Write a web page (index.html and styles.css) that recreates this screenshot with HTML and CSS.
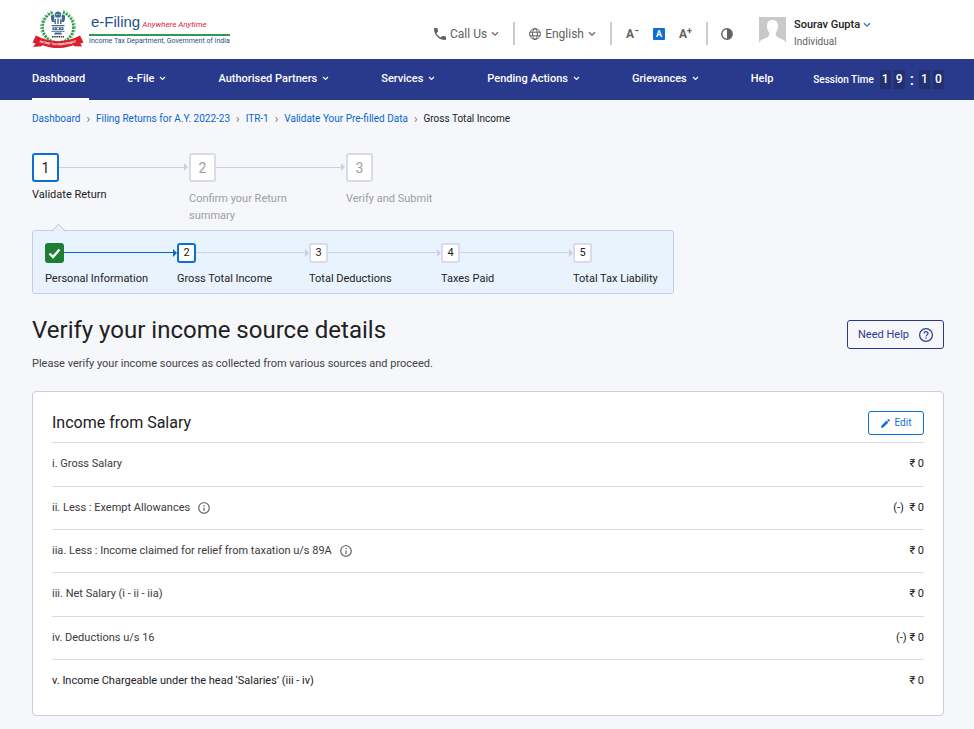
FILE: index.html
```
<!DOCTYPE html>
<html lang="en">
<head>
    <meta charset="UTF-8">
    <meta name="viewport" content="width=device-width, initial-scale=1.0">
    <title>Gross Total Income</title>
    <link rel="stylesheet" href="styles.css">
</head>
<body>

    <!-- Shared icons -->
    <svg class="icon-defs" width="0" height="0" aria-hidden="true">
        <symbol id="chevron" viewBox="0 0 8 6">
            <path d="M1 1.2 4 4.2 7 1.2" fill="none" stroke="currentColor" stroke-width="1.3"/>
        </symbol>
        <symbol id="info" viewBox="0 0 24 24">
            <path fill="currentColor" d="M11 7h2v2h-2zm0 4h2v6h-2zm1-9C6.48 2 2 6.48 2 12s4.48 10 10 10 10-4.480 10-10S17.520 2 12 2zm0 18c-4.410 0-8-3.590-8-8s3.590-8 8-8 8 3.590 8 8-3.590 8-8 8z"/>
        </symbol>
    </svg>

    <header class="header">
        <a class="logo" href="#">
            <svg class="emblem" viewBox="0 0 52 40" aria-hidden="true">
                <circle cx="26" cy="19" r="15.500" fill="none" stroke="#2e9b4f" stroke-width="2.600" stroke-dasharray="2.200 0.9"/>
                <circle cx="26" cy="19" r="17.500" fill="none" stroke="#57b06d" stroke-width="1" stroke-dasharray="1.500 2"/>
                <rect x="21" y="0" width="10" height="5" fill="#fff"/>
                <g fill="#41698f">
                    <path d="M23.500 4.500c1.500-1.500 3.500-1.500 5 0l.8 2.500-1 2.500h-4.600l-1-2.500z"/>
                    <path d="M19 7.500l2.500-1.200 1 2-.5 3.700.8 2h-2.800l-1-3z"/>
                    <path d="M33 7.500l-2.500-1.200-1 2 .5 3.700-.8 2h2.800l1-3z"/>
                    <path d="M22.500 11h1.400v5h-1.400zM25.300 10.500h1.400v5.500h-1.400zM28.100 11h1.400v5h-1.400z"/>
                    <path d="M19.500 17h13v1.200h-13zM20.500 19.200h11v2.800h-11zM19.500 22.800h13v1h-13zM23 24.500h6l1.200 2h-8.400z"/>
                </g>
                <g fill="#fff">
                    <circle cx="24.800" cy="6.600" r=".6"/>
                    <circle cx="27.200" cy="6.600" r=".6"/>
                    <circle cx="26" cy="20.600" r="1.100"/>
                    <circle cx="22.500" cy="20.600" r=".6"/>
                    <circle cx="29.500" cy="20.600" r=".6"/>
                </g>
                <path d="M20 28.800h12" fill="none" stroke="#333" stroke-width="1.500" stroke-dasharray="1.500 .7"/>
                <path fill="#d91f2d" d="M4 27.500C18 35 34 35 48 27.500L51.500 34.500 48.500 35.500 50 38.500 42.500 38.300 41.500 37.300C31 41 21 41 10.500 37.300L9.500 38.300 1 39 3.500 35.500.5 34.500z"/>
                <path id="ribbon-line" fill="none" d="M3 32.500C18 38.800 34 38.800 49 32.500"/>
                <text class="ribbon-text"><textPath href="#ribbon-line" startOffset="50%" text-anchor="middle">INCOME TAX DEPARTMENT</textPath></text>
            </svg>
            <span class="logo-text">
                <span class="logo-title">e-Filing <em>Anywhere Anytime</em></span>
                <span class="logo-sub">Income Tax Department, Government of India</span>
            </span>
        </a>

        <div class="tools">
            <button type="button" class="tool call">
                <svg width="12" height="12" viewBox="3 3 18 18" aria-hidden="true"><path fill="currentColor" d="M6.620 10.790c1.440 2.830 3.760 5.140 6.590 6.590l2.200-2.200c.27-.27.67-.36 1.020-.24 1.120.37 2.330.57 3.570.57.55 0 1 .45 1 1V20c0 .55-.45 1-1 1-9.390 0-17-7.610-17-17 0-.55.45-1 1-1h3.500c.55 0 1 .45 1 1 0 1.250.2 2.450.57 3.570.11.35.03.74-.25 1.020l-2.200 2.200z"/></svg>
                Call Us
                <svg class="caret brown" aria-hidden="true"><use href="#chevron"/></svg>
            </button>
            <button type="button" class="tool lang">
                <svg width="12" height="12" viewBox="0 0 12 12" fill="none" stroke="currentColor" stroke-width="1" aria-hidden="true"><circle cx="6" cy="6" r="5.400"/><ellipse cx="6" cy="6" rx="2.400" ry="5.400"/><path d="M.9 4.200h10.200M.9 7.800h10.200"/></svg>
                English
                <svg class="caret brown" aria-hidden="true"><use href="#chevron"/></svg>
            </button>
            <div class="tool sizes">
                <button type="button" class="size" aria-label="Decrease text size">A<sup>−</sup></button>
                <button type="button" class="size active" aria-label="Normal text size">A</button>
                <button type="button" class="size" aria-label="Increase text size">A<sup>+</sup></button>
            </div>
            <button type="button" class="tool contrast" aria-label="Contrast">
                <svg width="12" height="12" viewBox="0 0 12 12" aria-hidden="true"><circle cx="6" cy="6" r="5.200" fill="#fff" stroke="currentColor" stroke-width="1.400"/><path d="M6 1a5 5 0 0 1 0 10z" fill="currentColor"/></svg>
            </button>
            <button type="button" class="user">
                <svg class="avatar" viewBox="0 0 27 27" aria-hidden="true"><rect width="27" height="27" fill="#c9c9c9"/><path fill="#fff" d="M13.500 3c3.500 0 5.500 2.300 5.500 6 0 2.600-.8 5-2.300 6.600 0 2.600.3 4 2.300 4.900 3 1.300 7 2 8 5.500v1H0v-1c1-3.500 5-4.200 8-5.500 2-.9 2.300-2.300 2.300-4.900C8.800 14 8 11.600 8 9c0-3.700 2-6 5.500-6z"/></svg>
                <span class="user-text">
                    <span class="user-name">Sourav Gupta <svg class="caret" aria-hidden="true"><use href="#chevron"/></svg></span>
                    <span class="user-role">Individual</span>
                </span>
            </button>
        </div>
    </header>

    <nav class="nav">
        <a class="nav-item current" href="#">Dashboard</a>
        <button type="button" class="nav-item">e-File <svg class="caret" aria-hidden="true"><use href="#chevron"/></svg></button>
        <button type="button" class="nav-item">Authorised Partners <svg class="caret" aria-hidden="true"><use href="#chevron"/></svg></button>
        <button type="button" class="nav-item">Services <svg class="caret" aria-hidden="true"><use href="#chevron"/></svg></button>
        <button type="button" class="nav-item">Pending Actions <svg class="caret" aria-hidden="true"><use href="#chevron"/></svg></button>
        <button type="button" class="nav-item">Grievances <svg class="caret" aria-hidden="true"><use href="#chevron"/></svg></button>
        <a class="nav-item help" href="#">Help</a>
        <div class="session">
            <span class="session-label">Session Time</span>
            <span class="digit">1</span>
            <span class="digit">9</span>
            <span class="colon">:</span>
            <span class="digit">1</span>
            <span class="digit">0</span>
        </div>
    </nav>

    <main class="content">
        <ol class="breadcrumb">
            <li><a href="#">Dashboard</a></li>
            <li><a href="#">Filing Returns for A.Y. 2022-23</a></li>
            <li><a href="#">ITR-1</a></li>
            <li><a href="#">Validate Your Pre-filled Data</a></li>
            <li>Gross Total Income</li>
        </ol>

        <!-- Main steps -->
        <ol class="steps">
            <li class="step active"><span class="step-no">1</span><span class="step-label">Validate Return</span></li>
            <li class="step"><span class="step-no">2</span><span class="step-label">Confirm your Return summary</span></li>
            <li class="step"><span class="step-no">3</span><span class="step-label">Verify and Submit</span></li>
        </ol>

        <!-- Sub steps of the current step -->
        <ol class="steps substeps">
            <li class="step done">
                <span class="step-no"><svg width="13" height="11" viewBox="0 0 13 11" aria-hidden="true"><path d="M1.500 5.500 5 9 11.500 1.500" fill="none" stroke="#fff" stroke-width="2.400"/></svg></span>
                <span class="step-label">Personal Information</span>
            </li>
            <li class="step active"><span class="step-no">2</span><span class="step-label">Gross Total Income</span></li>
            <li class="step"><span class="step-no">3</span><span class="step-label">Total Deductions</span></li>
            <li class="step"><span class="step-no">4</span><span class="step-label">Taxes Paid</span></li>
            <li class="step"><span class="step-no">5</span><span class="step-label">Total Tax Liability</span></li>
        </ol>

        <div class="title-row">
            <div>
                <h1>Verify your income source details</h1>
                <p class="intro">Please verify your income sources as collected from various sources and proceed.</p>
            </div>
            <button type="button" class="help-btn">
                Need Help
                <svg width="14" height="14" viewBox="0 0 14 14" fill="none" stroke="currentColor" aria-hidden="true"><circle cx="7" cy="7" r="6.400" stroke-width="1.200"/><path d="M5.100 5.600c0-2.600 3.900-2.500 3.900-.2 0 1.400-1.900 1.500-1.900 3M7.100 9.500v1.300" stroke-width="1.200"/></svg>
            </button>
        </div>

        <section class="card">
            <div class="card-head">
                <h2>Income from Salary</h2>
                <button type="button" class="edit-btn">
                    <svg width="9" height="9" viewBox="0 0 9 9" aria-hidden="true"><path fill="currentColor" d="M0 9l.4-2.200L5.600 1.600l1.800 1.800L2.200 8.600zM6.200 1l.8-.8c.2-.2.5-.2.7 0L8.800 1.300c.2.2.2.5 0 .7L8 2.800z"/></svg>
                    Edit
                </button>
            </div>
            <table class="income">
                <tr>
                    <th scope="row">i. Gross Salary</th>
                    <td>₹ 0</td>
                </tr>
                <tr>
                    <th scope="row">ii. Less : Exempt Allowances <svg class="info" aria-hidden="true"><use href="#info"/></svg></th>
                    <td>(-)&nbsp; ₹ 0</td>
                </tr>
                <tr>
                    <th scope="row">iia. Less : Income claimed for relief from taxation u/s 89A <svg class="info" aria-hidden="true"><use href="#info"/></svg></th>
                    <td>₹ 0</td>
                </tr>
                <tr class="net">
                    <th scope="row">iii. Net Salary (i - ii - iia)</th>
                    <td>₹ 0</td>
                </tr>
                <tr>
                    <th scope="row">iv. Deductions u/s 16</th>
                    <td>(-) ₹ 0</td>
                </tr>
                <tr class="total">
                    <th scope="row">v. Income Chargeable under the head ‘Salaries’ (iii - iv)</th>
                    <td>₹ 0</td>
                </tr>
            </table>
        </section>
    </main>

</body>
</html>
```

FILE: styles.css
```
* {
    box-sizing: border-box;
}
body {
    margin: 0;
    background-color: #f5f7fb;
    color: #212121;
    font-family: Roboto, "Liberation Sans", sans-serif;
    font-size: 11px;
    line-height: 16px;
}
button {
    padding: 0;
    border: none;
    background: none;
    color: inherit;
    font: inherit;
    cursor: pointer;
}
a {
    color: #0b66c9;
    text-decoration: none;
}
ol {
    margin: 0;
    padding: 0;
    list-style: none;
}
.icon-defs {
    display: block;
}
.caret {
    width: 8px;
    height: 6px;
    flex: none;
}
.brown {
    color: #7a6558;
}

/* Header */
.header {
    display: flex;
    justify-content: space-between;
    height: 59px;
    padding: 0 30px 0 32px;
    background-color: #fff;
}
.logo {
    display: flex;
    align-items: flex-start;
    gap: 5px;
    padding-top: 8px;
    color: #1d4f85;
}
.emblem {
    width: 52px;
    height: 40px;
}
.ribbon-text {
    font-size: 3px;
    font-weight: bold;
    fill: #fff;
}
.logo-text {
    display: flex;
    flex-direction: column;
    padding-top: 5px;
    white-space: nowrap;
}
.logo-title {
    padding-left: 2px;
    border-bottom: 2px solid #2e9b4f;
    font-family: "Liberation Sans", Arial, sans-serif;
    font-size: 15px;
    line-height: 18px;
}
.logo-title em {
    margin-left: -2px;
    color: #e0203a;
    font-family: Roboto, sans-serif;
    font-size: 8px;
}
.logo-sub {
    font-size: 7px;
    line-height: 10px;
}
.tools {
    display: flex;
    align-items: flex-start;
    padding-top: 17px;
    color: #616161;
}
.tool {
    display: flex;
    align-items: center;
    gap: 4px;
    height: 23px;
    margin-top: 5px;
    padding: 0 14px;
    border-right: 2px solid #ccc;
    font-size: 12px;
}
.sizes {
    gap: 14px;
}
.size {
    font-size: 12px;
    font-weight: 700;
}
.size sup {
    font-size: 9px;
    line-height: 1px;
    vertical-align: 4px;
}
.active.size {
    width: 12px;
    height: 12px;
    border-radius: 1px;
    background-color: #0b6fd6;
    color: #fff;
    font-size: 9px;
    line-height: 12px;
}
.contrast {
    padding-right: 26px;
    padding-left: 13px;
    border-right: none;
}
.user {
    display: flex;
    gap: 8px;
    width: 185px;
    text-align: left;
}
.avatar {
    width: 27px;
    height: 27px;
}
.user-text {
    display: flex;
    flex-direction: column;
}
.user-name {
    color: #212121;
    font-size: 11px;
    font-weight: 500;
}
.user-name .caret {
    color: #4a7291;
}
.user-role {
    font-size: 10px;
    line-height: 18px;
}

/* Navigation */
.nav {
    display: flex;
    gap: 38px;
    height: 41px;
    padding: 0 30px 0 32px;
    background-color: #293a8c;
    color: #fff;
}
.nav-item {
    display: flex;
    align-items: center;
    gap: 5px;
    padding-right: 14px;
    border-bottom: 2px solid transparent;
    color: #fff;
    font-size: 11px;
    font-weight: 500;
    white-space: nowrap;
}
.nav-item .caret {
    width: 7px;
    height: 5px;
}
.current {
    padding-right: 4px;
    border-color: #fff;
}
.help {
    padding-right: 0;
}
.session {
    display: flex;
    align-items: center;
    gap: 3px;
    margin-left: auto;
    font-weight: 500;
    white-space: nowrap;
}
.session-label {
    margin-right: 3px;
    font-size: 10px;
}
.digit {
    width: 11px;
    background-color: #23306f;
    font-size: 12px;
    line-height: 19px;
    text-align: center;
}
.colon {
    padding: 0 2px;
    font-size: 16px;
}

/* Page */
.content {
    padding: 10px 30px 13px 32px;
}
.breadcrumb {
    display: flex;
    font-size: 10px;
    line-height: 18px;
}
.breadcrumb li {
    display: flex;
}
.breadcrumb li + li::before {
    content: "›";
    margin: 0 6px;
    color: #757575;
    font-size: 12px;
}

/* Steps */
.steps {
    display: grid;
    grid-template-columns: repeat(3, 157px);
    margin-top: 25px;
}
.step {
    color: #9e9e9e;
}
.step-no {
    position: relative;
    display: flex;
    align-items: center;
    justify-content: center;
    width: 27px;
    height: 29px;
    border: 2px solid #dadaeb;
    border-radius: 3px;
    background-color: #fff;
    font-size: 14px;
}
.step-label {
    display: block;
    width: 120px;
    margin-top: 8px;
    line-height: 17px;
}
.active .step-no {
    border-color: #0b6fd6;
}
.active .step-label {
    margin-top: 4px;
}
.active {
    color: #212121;
}

/* connector line and arrow head between two boxes */
.step:not(:last-child) .step-no::before {
    content: "";
    position: absolute;
    top: 12px;
    left: 25px;
    width: 126px;
    height: 1px;
    background-color: #ccd0e6;
}
.step:not(:last-child) .step-no::after {
    content: "";
    position: absolute;
    top: 8px;
    left: 150px;
    border: 4px solid transparent;
    border-right: none;
    border-left-color: #ccd0e6;
}
.substeps {
    position: relative;
    grid-template-columns: repeat(5, 132px);
    width: 642px;
    max-width: 100%;
    margin-top: 6px;
    padding: 12px 0 6px 12px;
    border: 1px solid #c5cee8;
    border-radius: 3px;
    background-color: #e9f3fd;
}
.substeps::before {
    content: "";
    position: absolute;
    top: -5px;
    left: 20px;
    width: 9px;
    height: 9px;
    border: 1px solid #c5cee8;
    border-right-color: transparent;
    border-bottom-color: transparent;
    background: linear-gradient(135deg, #e9f3fd 50%, transparent 50%);
    transform: rotate(45deg);
}
.substeps .step {
    color: #212121;
}
.substeps .step-no {
    width: 19px;
    height: 20px;
    font-size: 11px;
}
.substeps .step-label {
    margin-top: 7px;
}
.substeps .step:not(:last-child) .step-no::before {
    top: 7px;
    left: 17px;
    width: 110px;
}
.substeps .step:not(:last-child) .step-no::after {
    top: 4px;
    left: 126px;
}
.substeps .done .step-no {
    border-color: #1e7e34;
    background-color: #1e7e34;
}
.substeps .done:not(:last-child) .step-no::before {
    background-color: #0b66c9;
}
.substeps .done:not(:last-child) .step-no::after {
    border-left-color: #0b66c9;
}

/* Title */
.title-row {
    display: flex;
    align-items: flex-start;
    justify-content: space-between;
    margin-top: 20px;
}
h1 {
    margin: 0;
    font-size: 24px;
    font-weight: 400;
    line-height: 32px;
}
.intro {
    margin: 10px 0 19px;
    color: #424242;
}
.help-btn {
    display: flex;
    align-items: center;
    gap: 10px;
    height: 29px;
    margin-top: 6px;
    padding: 0 10px;
    border: 1px solid #293a8c;
    border-radius: 3px;
    color: #293a8c;
}

/* Card */
.card {
    padding: 19px 19px 13px;
    border: 1px solid #c9cce3;
    border-radius: 4px;
    background-color: #fff;
}
.card-head {
    display: flex;
    align-items: flex-start;
    justify-content: space-between;
    padding-bottom: 7px;
    border-bottom: 1px solid #d9d9ea;
}
h2 {
    margin: 0;
    font-size: 16px;
    font-weight: 400;
    line-height: 24px;
}
.edit-btn {
    display: flex;
    align-items: center;
    justify-content: center;
    gap: 5px;
    width: 56px;
    height: 24px;
    border: 1px solid #0b6fd6;
    border-radius: 3px;
    color: #0b6fd6;
    font-size: 10px;
}
.income {
    width: 100%;
    border-collapse: collapse;
    color: #3a3a3a;
}
.income th,
.income td {
    height: 43px;
    padding: 0;
    font-weight: 400;
    text-align: left;
}
.income .net > * {
    height: 44px;
}
.income td {
    color: #212121;
    text-align: right;
}
.income tr:not(:last-child) {
    border-bottom: 1px solid #d9d9ea;
}
.income .total {
    color: #212121;
}
.info {
    width: 14px;
    height: 14px;
    margin-left: 4px;
    color: #616161;
    vertical-align: -4px;
}
```
